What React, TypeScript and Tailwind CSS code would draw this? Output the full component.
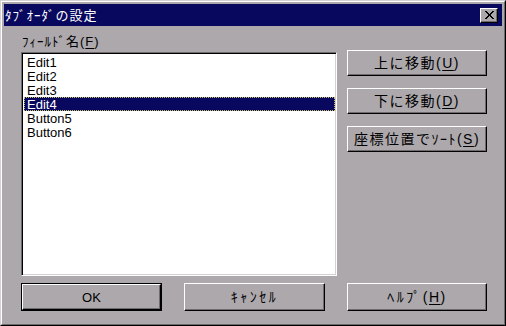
import React from "react";

const FONT = { fontFamily: '"Liberation Sans", "Noto Sans CJK JP", sans-serif' };

function Btn({ children, def, className = "" }: { children: React.ReactNode; def?: boolean; className?: string }) {
  const inner = (
    <div className="flex h-full w-full items-center justify-center border border-t-white border-l-white border-r-black border-b-black bg-[#aca8ac] text-[14px] leading-none tracking-[1.5px] text-black shadow-[inset_-1px_-1px_#6e6a6e]">
      {children}
    </div>
  );
  if (def) {
    return <div className={`border border-black ${className}`}>{inner}</div>;
  }
  return <div className={className}>{inner}</div>;
}

const items = ["Edit1", "Edit2", "Edit3", "Edit4", "Button5", "Button6"];

export default function App() {
  return (
    <div style={FONT} className="h-[326px] w-[506px] border border-t-[#d4d0d4] border-l-[#d4d0d4] border-r-black border-b-black bg-[#aca8ac]">
      <div className="flex h-full flex-col border border-t-white border-l-white border-r-[#6e6a6e] border-b-[#6e6a6e] p-[2px]">
        {/* title bar */}
        <div className="flex h-[22px] items-center justify-between bg-[#08085e] pl-[1px] pr-[4px]">
          <span className="text-[13px] leading-none tracking-[1px] text-white">ﾀﾌﾞｵｰﾀﾞの設定</span>
          <div className="flex h-[15px] w-[18px] items-center justify-center border border-t-white border-l-white border-r-black border-b-black bg-[#aca8ac] shadow-[inset_-1px_-1px_#6e6a6e]">
            <svg width="9" height="8" viewBox="0 0 9 8" shapeRendering="crispEdges">
              <g fill="#000">
                <rect x="0" y="0" width="2" height="1" />
                <rect x="7" y="0" width="2" height="1" />
                <rect x="1" y="1" width="2" height="1" />
                <rect x="6" y="1" width="2" height="1" />
                <rect x="2" y="2" width="2" height="1" />
                <rect x="5" y="2" width="2" height="1" />
                <rect x="3" y="3" width="3" height="1" />
                <rect x="3" y="4" width="3" height="1" />
                <rect x="2" y="5" width="2" height="1" />
                <rect x="5" y="5" width="2" height="1" />
                <rect x="1" y="6" width="2" height="1" />
                <rect x="6" y="6" width="2" height="1" />
                <rect x="0" y="7" width="2" height="1" />
                <rect x="7" y="7" width="2" height="1" />
              </g>
            </svg>
          </div>
        </div>

        {/* body */}
        <div className="flex flex-1 flex-col pl-[17px] pr-[15px] pt-[8px]">
          <div className="flex items-start gap-[10px]">
            <div className="flex w-[316px] flex-col">
              <div className="h-[16px] pl-[1px] text-[13px] leading-[16px] tracking-[1px] text-black">
                ﾌｨｰﾙﾄﾞ名(<span className="underline underline-offset-2">F</span>)
              </div>
              <div className="mt-[2px] h-[224px] border border-t-[#6e6a6e] border-l-[#6e6a6e] border-r-white border-b-white bg-white p-[1px] shadow-[inset_1px_1px_#000,inset_-1px_-1px_#d4d0d4]">
                <div className="pl-[1px] pt-[1px]">
                  {items.map((it, i) =>
                    i === 3 ? (
                      <div key={it} className="flex h-[14px] items-center border border-dotted border-[#c8c060] bg-[#08085e] pl-[2px] text-[13px] leading-none text-white">
                        {it}
                      </div>
                    ) : (
                      <div key={it} className="flex h-[14px] items-center pl-[3px] text-[13px] leading-none text-black">
                        {it}
                      </div>
                    )
                  )}
                </div>
              </div>
            </div>
            <div className="mt-[16px] flex w-[140px] flex-col gap-[12px]">
              <Btn className="h-[26px]">
                上に移動(<span className="underline underline-offset-2">U</span>)
              </Btn>
              <Btn className="h-[26px]">
                下に移動(<span className="underline underline-offset-2">D</span>)
              </Btn>
              <Btn className="h-[26px]">
                座標位置でｿｰﾄ(<span className="underline underline-offset-2">S</span>)
              </Btn>
            </div>
          </div>
          <div className="mt-[7px] flex gap-[22px]">
            <Btn def className="h-[28px] w-[141px]"><span className="text-[13px] tracking-normal">OK</span></Btn>
            <Btn className="h-[28px] w-[141px]"><span className="tracking-[2.5px]">ｷｬﾝｾﾙ</span></Btn>
            <Btn className="h-[28px] w-[140px]">
              <span className="tracking-[2.5px]">ﾍﾙﾌﾟ</span>(<span className="underline underline-offset-2">H</span>)
            </Btn>
          </div>
        </div>
      </div>
    </div>
  );
}
